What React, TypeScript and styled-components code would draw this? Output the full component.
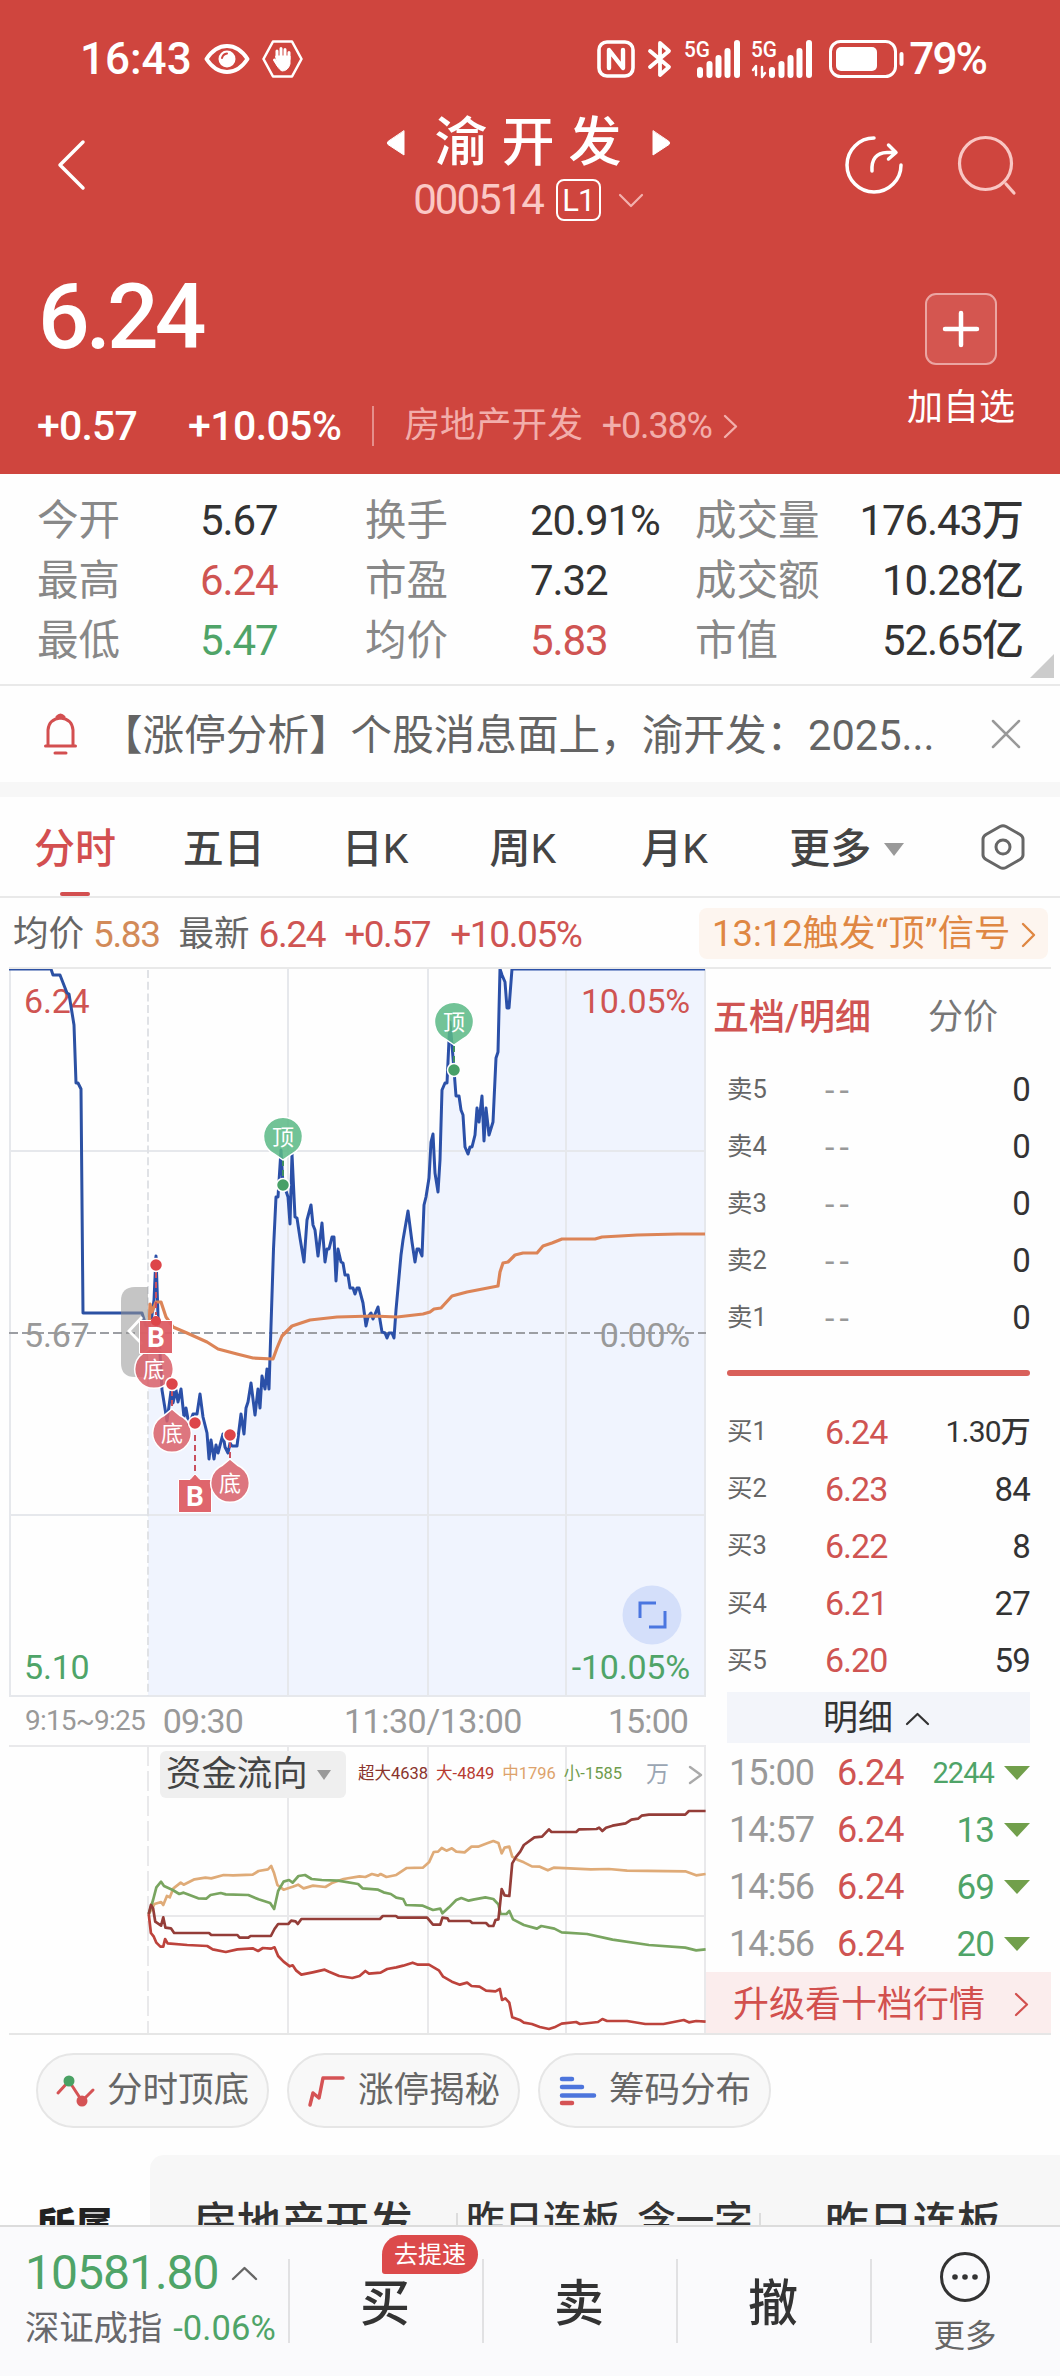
import React from 'react';
import styled, { createGlobalStyle } from 'styled-components';

const RED = '#cf5452';
const GREEN = '#4fa468';

const Global = createGlobalStyle`
  * { box-sizing: border-box; }
  body { margin: 0; background: #fefefe; }
`;

const Page = styled.div`
  width: 1060px;
  height: 2376px;
  overflow: hidden;
  display: flex;
  flex-direction: column;
  background: #fefefe;
  font-family: Roboto, 'Noto Sans CJK SC', sans-serif;
  line-height: 1;
  white-space: nowrap;
  color: #333;
`;

interface TextProps {
  $size: number;
  $color?: string;
  $weight?: number;
  $gap?: number;
  $ml?: number;
}

const Text = styled.span<TextProps>`
  font-size: ${(p) => p.$size}px;
  color: ${(p) => p.$color ?? 'inherit'};
  font-weight: ${(p) => p.$weight ?? 400};
  letter-spacing: ${(p) => p.$gap ?? 0}px;
  margin-left: ${(p) => p.$ml ?? 0}px;
`;

const Icon = styled.svg<{ $ml?: number }>`
  display: block;
  flex: none;
  overflow: visible;
  margin-left: ${(p) => p.$ml ?? 0}px;
  fill: none;
  stroke-linecap: round;
  stroke-linejoin: round;
`;

/* ---------- header ---------- */

const Header = styled.header`
  height: 474px;
  flex: none;
  background: #cf453e;
  color: #fff;
  display: flex;
  flex-direction: column;
`;

const StatusBar = styled.div`
  height: 116px;
  padding: 2px 74px 0 80px;
  display: flex;
  align-items: center;
  justify-content: space-between;
`;

const Cluster = styled.div`
  display: flex;
  align-items: center;
`;

const NavBar = styled.div`
  height: 124px;
  padding: 0 44px 0 57px;
  display: grid;
  grid-template-columns: 230px 1fr 230px;
`;

const NavSide = styled.div<{ $end?: boolean }>`
  display: flex;
  align-items: center;
  height: 98px;
  justify-content: ${(p) => (p.$end ? 'flex-end' : 'flex-start')};
  gap: 55px;
`;

const TitleBox = styled.div`
  display: flex;
  flex-direction: column;
  align-items: center;
  padding-right: 17px;
`;

const TitleRow = styled.div`
  height: 60px;
  display: flex;
  align-items: center;
  margin-top: -3px;
`;

const CodeRow = styled.div`
  height: 44px;
  margin-top: 5px;
  display: flex;
  align-items: center;
`;

const LevelTag = styled.span`
  width: 45px;
  height: 42px;
  margin: 0 18px 0 13px;
  border: 2px solid #fff;
  border-radius: 8px;
  font-size: 31px;
  letter-spacing: -1px;
  display: flex;
  align-items: center;
  justify-content: center;
`;

const PriceArea = styled.div`
  flex: 1;
  display: flex;
  justify-content: space-between;
  padding: 0 36px 0 37px;
`;

const PriceCol = styled.div`
  display: flex;
  flex-direction: column;
`;

const BigPrice = styled.div`
  height: 151px;
  padding: 3px 0 0 1px;
  display: flex;
  align-items: center;
  font-size: 91px;
  font-weight: 500;
  letter-spacing: -4px;
`;

const ChangeRow = styled.div`
  height: 70px;
  display: flex;
  align-items: center;
`;

const HeaderDivider = styled.i`
  width: 2px;
  height: 40px;
  margin: 0 30px 0 31px;
  background: #e58f8b;
`;

const AddBox = styled.div`
  width: 126px;
  display: flex;
  flex-direction: column;
  align-items: center;
  padding-top: 53px;
  gap: 25px;
`;

const AddButton = styled.div`
  width: 72px;
  height: 72px;
  border: 2px solid #eba5a2;
  border-radius: 11px;
  background: #d45650;
  display: flex;
  align-items: center;
  justify-content: center;
`;

/* ---------- quote summary ---------- */

const Stats = styled.section`
  position: relative;
  height: 212px;
  flex: none;
  padding: 17px 37px 0 37px;
  border-bottom: 2px solid #e9e9e9;
`;

const StatRow = styled.div`
  height: 60px;
  display: grid;
  grid-template-columns: 163px 165px 165px 165px 124px 1fr;
  align-items: center;
`;

const StatValue = styled.span<{ $tone?: string; $end?: boolean }>`
  font-size: 42px;
  font-weight: 450;
  letter-spacing: -1.1px;
  color: ${(p) => p.$tone ?? '#333'};
  text-align: ${(p) => (p.$end ? 'right' : 'left')};
`;

const Corner = styled.i`
  position: absolute;
  right: 6px;
  bottom: 6px;
  border-left: 24px solid transparent;
  border-bottom: 24px solid #ccc;
`;

const Notice = styled.section`
  height: 111px;
  flex: none;
  display: flex;
  align-items: center;
  padding: 0 40px 0 44px;
  border-bottom: 15px solid #f7f7f7;
`;

const NoticeText = styled.div`
  flex: 1;
  margin-left: 24px;
  padding-top: 4px;
  font-size: 41.6px;
  color: #646464;
`;

const Tabs = styled.nav`
  height: 101px;
  flex: none;
  display: flex;
  align-items: center;
  padding: 0 35px 0 34px;
  border-bottom: 2px solid #e9e9e9;
`;

const Tab = styled.div<{ $active?: boolean; $width: number }>`
  position: relative;
  width: ${(p) => p.$width}px;
  height: 99px;
  padding-top: 5px;
  display: flex;
  align-items: center;
  font-size: 41px;
  font-weight: 450;
  color: ${(p) => (p.$active ? '#d34f50' : '#444')};
  &::after {
    content: '';
    display: ${(p) => (p.$active ? 'block' : 'none')};
    position: absolute;
    left: 26px;
    bottom: 0;
    width: 30px;
    height: 4px;
    border-radius: 2px;
    background: #d34f50;
  }
`;

const Caret = styled.i<{ $w: number; $h: number; $color: string; $ml?: number }>`
  flex: none;
  border: ${(p) => p.$w / 2}px solid transparent;
  border-bottom: 0;
  border-top: ${(p) => p.$h}px solid ${(p) => p.$color};
  margin-left: ${(p) => p.$ml ?? 0}px;
`;

const InfoRow = styled.div`
  height: 71px;
  flex: none;
  display: flex;
  align-items: center;
  margin: 0 9px;
  padding: 4px 3px 0 4px;
  border-bottom: 2px solid #e9e9e9;
`;

const Signal = styled.div`
  height: 51px;
  width: 349px;
  margin-left: auto;
  margin-top: -3px;
  border-radius: 8px;
  background: #fdf5ef;
  color: #df8743;
  display: flex;
  align-items: center;
  padding: 3px 13px 0 13px;
  justify-content: space-between;
  font-size: 36.4px;
`;

/* ---------- trading area ---------- */

const Trading = styled.section`
  display: flex;
  height: 1066px;
  flex: none;
  position: relative;
  &::after {
    content: '';
    position: absolute;
    left: 9px;
    right: 9px;
    bottom: 0;
    height: 2px;
    background: #e6e6e6;
  }
`;

const ChartCol = styled.div`
  width: 706px;
  flex: none;
`;

const Plot = styled.svg`
  display: block;
  font-family: Roboto, 'Noto Sans CJK SC', sans-serif;
`;

const Axis = styled.div`
  height: 48px;
  padding: 0 0 0 25px;
  display: flex;
  align-items: center;
  color: #999;
`;

const FlowPanel = styled.div`
  position: relative;
  height: 290px;
`;

const FlowHead = styled.div`
  position: absolute;
  left: 160px;
  top: 6px;
  right: 2px;
  height: 47px;
  display: flex;
  align-items: center;
`;

const FlowSelect = styled.div`
  width: 186px;
  height: 47px;
  border-radius: 6px;
  background: #efefef;
  color: #444;
  font-size: 35.4px;
  display: flex;
  align-items: center;
  padding-left: 6px;
`;

const BookCol = styled.div`
  flex: 1;
  padding-right: 9px;
  display: flex;
  flex-direction: column;
`;

const BookTabs = styled.div`
  height: 92px;
  display: flex;
  align-items: center;
  padding: 5px 0 0 7px;
`;

const BookRow = styled.div`
  height: 57.1px;
  flex: none;
  margin: 0 21px;
  display: grid;
  grid-template-columns: 98px 80px 1fr;
  align-items: center;
  font-size: 25.5px;
  color: #666;
`;

const BookPrice = styled.span<{ $empty?: boolean }>`
  font-size: 34px;
  font-weight: 450;
  letter-spacing: ${(p) => (p.$empty ? 5 : -1)}px;
  color: ${(p) => (p.$empty ? '#999' : RED)};
`;

const BookQty = styled.span<{ $small?: boolean }>`
  font-size: ${(p) => (p.$small ? 30 : 33)}px;
  font-weight: 450;
  color: #333;
  text-align: right;
  letter-spacing: -0.8px;
`;

const Balance = styled.div`
  height: 6px;
  margin: 24px 21px 27px 21px;
  border-radius: 3px;
  background: #d9605a;
  flex: none;
`;

const DetailHead = styled.div`
  height: 51px;
  flex: none;
  margin: 3px 21px 0;
  padding: 3px 5px 0 0;
  background: #f3f5fa;
  display: flex;
  align-items: center;
  justify-content: center;
  gap: 13px;
  font-size: 35px;
  color: #333;
`;

const TickRow = styled.div`
  position: relative;
  height: 57px;
  flex: none;
  margin: 0 21px;
  display: grid;
  grid-template-columns: 108px 80px 1fr 36px;
  align-items: center;
  font-size: 36px;
  letter-spacing: -0.9px;
  color: #999;
  padding: 4px 0 0 2px;
`;

const TickPrice = styled.span`
  color: ${RED};
  font-weight: 450;
`;

const TickQty = styled.span<{ $small?: boolean }>`
  color: ${GREEN};
  text-align: right;
  font-weight: 450;
  font-size: ${(p) => (p.$small ? 29 : 35)}px;
`;

const Upgrade = styled.div`
  height: 61px;
  margin-top: auto;
  margin-bottom: 2px;
  background: #fbeded;
  color: #d2504e;
  font-size: 36px;
  display: flex;
  align-items: center;
  justify-content: space-between;
  padding: 4px 23px 0 27px;
`;

/* ---------- shortcuts & related ---------- */

const Shortcuts = styled.div`
  height: 120px;
  flex: none;
  padding: 18px 36px 0;
  display: flex;
  gap: 18px;
`;

const Shortcut = styled.div`
  width: 233px;
  height: 75px;
  border: 2px solid #e6e6e6;
  border-radius: 38px;
  background: #f8f8f8;
  color: #666;
  font-size: 35.5px;
  display: flex;
  align-items: center;
  padding-left: 18px;
  gap: 11px;
`;

const Related = styled.section`
  height: 70px;
  flex: none;
  overflow: hidden;
  display: flex;
  color: #333;
`;

const RelatedLabel = styled.div`
  width: 150px;
  flex: none;
  padding: 52px 0 0 37px;
  font-size: 38px;
  font-weight: 900;
  color: #222;
`;

const RelatedPanel = styled.div`
  flex: 1;
  background: #f7f7f7;
  border-top-left-radius: 14px;
  display: flex;
  padding: 47px 0 0 43px;
`;

const RelatedDivider = styled.i<{ $ml?: number }>`
  width: 2px;
  height: 40px;
  margin-top: 11px;
  margin-left: ${(p) => p.$ml ?? 0}px;
  background: #ddd;
`;

const BottomBar = styled.footer`
  flex: 1;
  border-top: 2px solid #dcdcdc;
  background: #fafafc;
  display: flex;
`;

const IndexBox = styled.div`
  width: 288px;
  flex: none;
  padding: 19px 0 0 25px;
`;

const IndexRow = styled.div<{ $h: number }>`
  height: ${(p) => p.$h}px;
  display: flex;
  align-items: center;
`;

const Action = styled.div`
  position: relative;
  flex: none;
  width: 194px;
  font-size: 50px;
  font-weight: 500;
  color: #333;
  display: flex;
  justify-content: center;
  padding-top: 52px;
  &::before {
    content: '';
    position: absolute;
    left: 0;
    top: 32px;
    height: 84px;
    width: 2px;
    background: #e1e1e3;
  }
`;

const MoreAction = styled(Action)`
  padding-top: 25px;
  flex-direction: column;
  justify-content: flex-start;
  align-items: center;
  gap: 19px;
  font-size: 31.5px;
  font-weight: 400;
  color: #666;
  width: 190px;
`;

const Badge = styled.span`
  position: absolute;
  left: 94px;
  top: 8px;
  width: 96px;
  height: 39px;
  border-radius: 20px 20px 20px 3px;
  background: #dc4a4b;
  color: #fff;
  font-size: 24px;
  font-weight: 400;
  display: flex;
  align-items: center;
  justify-content: center;
`;

/* ---------- data ---------- */

const PRE_OPEN = '9,9 51,9 53,15 60,15 67,33 69,34 74,65 76,123 78,123 81,129 83,353 142,353 146,366 148,366';

const PRICE =
  '148,366 151,362 154,340 156,296 158,356 162,430 167,461 172,424 173,443 176,430 178,442 181,429 184,457 186,448 189,465 193,454 197,454 200,434 203,457 207,473 209,499 211,480 214,499 216,485 218,493 223,474 225,487 228,493 230,483 232,486 237,486 241,454 244,474 246,448 248,442 251,423 255,455 258,429 260,448 262,416 265,429 267,409 269,429 270,397 273.5,289 276,237 278,237 281,190 283,225 285,228 288,237 290,264 292,194 295,257 297,258 300,278 304,302 307,260 311,245 313,265 315,270 318,296 322,263 325,302 327,289 329,289 332,277 334,277 336,321 338,289 341,302 343,303 345,315 348,315 350,328 353,328 355,334 357,328 359,328 363,343 366,366 368,357 371,353 373,359 378,347 380,360 382,372 385,373 387,378 389,373 392,373 394,378 396,350 398,328 401,295 403,280 408,251 412,282 415,302 417,289 419,289 422,296 424,245 426,237 429,218 431,182 433,174 435,213 438,232 440,200 442,130 445,123 447,123 449,80 450,62 452,85 454,110 456,136 459,136 461,150 463,155 465,187 468,194 470,187 472,187 475,175 477,148 479,162 482,136 484,181 486,148 489,175 493,162 496,98 498,92 500,9 502,15 505,22 507,48 509,48 512,9 705,9';

const AVERAGE =
  '149,372 150,344 152,352 156,342 161,342 166,357 173,367 187,373 207,382 218,389 237,394 253,398 273,399 277,388 282,376 292,366 310,360 337,357 373,356 397,357 423,354 430,352 434,349 441,348 452,336 467,332 498,326 500,312 503,303 508,302 515,295 523,293 537,293 543,286 552,283 562,279 595,279 602,277 620,276 637,275 678,274 705,274';

const FLOWS = [
  {
    color: '#dfab78',
    points:
      '24,402 40,372 58,366 64,375 74,348 82,352 92,325 112,308 120,314 150,298 180,293 196,295 230,285 256,286 310,284 326,273 352,268 361,258 369,280 378,315 395,329 420,320 435,314 450,325 476,317 510,321 530,308 560,297 604,289 620,291 638,282 655,287 662,282 678,291 705,285 734,264 778,263 795,247 808,216 820,215 830,204 843,212 858,205 870,215 893,217 912,200 930,200 955,190 972,183 986,189 995,220 1003,203 1016,200 1024,230 1040,240 1056,247 1078,259 1100,260 1122,271 1138,263 1240,268 1290,267 1340,272 1500,274 1530,286 1556,282',
  },
  {
    color: '#79a560',
    points:
      '24,402 36,360 45,322 58,305 66,318 90,330 108,342 120,338 160,355 182,356 194,345 222,339 236,343 298,345 326,358 358,369 369,387 380,333 395,305 410,300 420,308 436,288 454,285 472,297 500,300 545,302 600,312 612,325 655,329 670,337 690,342 705,353 724,357 732,375 778,377 806,390 826,386 832,400 850,382 870,360 884,354 904,362 920,358 950,352 972,357 986,373 992,402 1008,402 1016,393 1026,418 1056,435 1092,446 1104,438 1140,446 1160,457 1230,462 1300,479 1400,495 1500,503 1530,511 1556,508',
  },
  {
    color: '#943d38',
    points:
      '24,402 30,375 36,385 42,425 58,437 64,412 70,443 85,445 94,459 190,459 196,465 268,465 274,473 298,473 304,468 360,468 370,447 380,432 408,432 416,422 428,424 434,432 444,417 660,417 668,408 704,408 710,413 790,413 806,434 826,434 832,413 846,415 850,423 908,423 914,429 952,429 960,438 972,438 978,420 986,418 995,327 1003,346 1016,348 1024,250 1035,230 1046,215 1056,195 1085,172 1106,170 1125,148 1132,156 1200,156 1208,148 1256,147 1263,143 1272,153 1282,143 1300,137 1336,130 1352,119 1370,116 1380,107 1400,104 1500,104 1510,93 1556,93',
  },
  {
    color: '#bd433c',
    points:
      '24,402 30,459 38,470 45,488 56,500 64,500 69,477 76,490 130,495 185,498 200,508 236,516 268,508 310,505 325,513 338,504 360,506 370,502 380,528 395,545 412,559 420,556 430,572 444,584 475,577 508,569 520,575 548,588 584,594 604,588 620,573 630,581 662,578 680,567 705,562 724,557 750,548 765,554 795,554 822,571 834,590 858,605 880,614 900,608 912,618 934,620 952,632 978,634 990,627 996,660 1005,655 1016,668 1024,712 1045,720 1056,728 1078,732 1100,741 1125,747 1140,742 1160,731 1200,726 1210,732 1260,726 1272,717 1285,723 1340,723 1390,732 1440,732 1496,720 1510,727 1530,723 1556,725',
  },
];

const STATS = [
  { a: '今开', av: '5.67', b: '换手', bv: '20.91%', c: '成交量', cv: '176.43万' },
  { a: '最高', av: '6.24', at: RED, b: '市盈', bv: '7.32', c: '成交额', cv: '10.28亿' },
  { a: '最低', av: '5.47', at: GREEN, b: '均价', bv: '5.83', bt: RED, c: '市值', cv: '52.65亿' },
];

const BIDS = [
  ['买1', '6.24', '1.30万'],
  ['买2', '6.23', '84'],
  ['买3', '6.22', '8'],
  ['买4', '6.21', '27'],
  ['买5', '6.20', '59'],
];

const TICKS = [
  ['15:00', '2244'],
  ['14:57', '13'],
  ['14:56', '69'],
  ['14:56', '20'],
];

/* ---------- pieces ---------- */

const Chevron = ({ w, h, color, sw = 2.4, ml }: { w: number; h: number; color: string; sw?: number; ml?: number }) => (
  <Icon $ml={ml} width={w} height={h} stroke={color} strokeWidth={sw}>
    <path d={`M1 1L${w - 1} ${h / 2}L1 ${h - 1}`} />
  </Icon>
);

const SignalBars = ({ data }: { data?: boolean }) => (
  <Icon $ml={data ? 9 : 11} width={data ? 63 : 58} height={38} viewBox={data ? '0 0 63 38' : '0 0 58 38'}>
    <text x="0" y="17" fontSize="22" fontWeight="500" fill="#fff" stroke="none" textLength="26" lengthAdjust="spacingAndGlyphs">
      5G
    </text>
    {data && (
      <path d="M5 35V27M2 30L5 26M11 27V36M14 33L11 37" stroke="#fff" strokeWidth="2.4" />
    )}
    <g stroke="#fff" strokeWidth="6" transform={data ? 'translate(5 0)' : undefined}>
      <path d="M16 30V35M25.500 24V35M34.500 18V35M43.500 11V35M53 3V35" />
    </g>
  </Icon>
);

const StatusIcons = () => (
  <Cluster>
    <Icon width={38} height={38} viewBox="0 0 38 38">
      <rect x="2" y="2" width="34" height="34" rx="8" stroke="#fff" strokeWidth="3.600" />
      <path d="M12 28V10L26 28V10" stroke="#fff" strokeWidth="4.400" />
    </Icon>
    <Icon $ml={12} width={26} height={38} viewBox="0 0 26 38" stroke="#fff" strokeWidth="3.800">
      <path d="M3 11L22 27L13 35V3L22 11L3 27" />
    </Icon>
    <SignalBars />
    <SignalBars data />
    <Icon $ml={15} width={76} height={38} viewBox="0 0 76 38">
      <rect x="1.500" y="1.500" width="65" height="35" rx="10" stroke="#fff" strokeWidth="3" />
      <rect x="7" y="7" width="41" height="24" rx="5" fill="#fff" />
      <path d="M72.500 14V24" stroke="#fff" strokeWidth="4" />
    </Icon>
    <Text $size={44} $weight={500} $gap={-1.9} $ml={4}>79%</Text>
  </Cluster>
);

interface PinProps {
  x: number;
  y: number;
  label: string;
  up?: boolean;
  color: string;
}

const RoundPin = ({ x, y, label, up, color }: PinProps) => (
  <g transform={`translate(${x} ${y})`}>
    <path
      d={up ? 'M0 -24L8 -17.500A19.300 19.300 0 1 1 -8 -17.500Z' : 'M0 23L-9 17A19.500 19.500 0 1 1 9 17Z'}
      fill={color}
      fillOpacity="0.86"
      stroke="#fff"
      strokeWidth="1.500"
    />
    <text y="8" fontSize="22" fill="#fff" textAnchor="middle">{label}</text>
  </g>
);

const BuyPin = ({ x, y }: { x: number; y: number }) => (
  <g transform={`translate(${x} ${y})`}>
    <path d="M-16.500 -16.500H-5L0 -22L5 -16.500H16.500V16.500H-16.500Z" fill="#dd5d64" fillOpacity="0.95" stroke="#fff" strokeWidth="1" />
    <text y="10" fontSize="28" fontWeight="700" fill="#fff" textAnchor="middle">B</text>
  </g>
);

const Dot = ({ x, y, color = '#dd4549' }: { x: number; y: number; color?: string }) => (
  <circle cx={x} cy={y} r="6.500" fill={color} stroke="#fff" strokeWidth="1.500" />
);

const MinuteChart = () => (
  <Plot width={706} height={728} viewBox="0 9 706 728">
    <polygon points={`${PRICE} 705,736 148,736`} fill="#f0f4fe" />
    <g stroke="#e6e8ec" strokeWidth="2" fill="none">
      <path d="M9 191H706M9 555H706M9 736H706M10 8V736M288 8V736M428 8V736M566 8V736M705 8V736" />
      <path d="M148 10V736" stroke="#e0e2e6" strokeDasharray="8 3.700" />
    </g>
    <path d="M9 373H706" stroke="#9c9ea3" strokeWidth="1.800" strokeDasharray="9 4" />
    <g fontSize="34" fontWeight="450" letterSpacing="-0.2">
      <text x="24" y="53" fill={RED}>6.24</text>
      <text x="690" y="53" fill={RED} textAnchor="end">10.05%</text>
      <text x="24" y="387" fill="#999">5.67</text>
      <text x="690" y="387" fill="#999" textAnchor="end">0.00%</text>
      <text x="24" y="719" fill={GREEN}>5.10</text>
      <text x="690" y="719" fill={GREEN} textAnchor="end">-10.05%</text>
    </g>
    <g fill="none" strokeLinejoin="round" strokeWidth="3">
      <polyline points={PRE_OPEN} stroke="#2c51a3" />
      <polyline points={PRICE} stroke="#2b50a8" />
      <polyline points={AVERAGE} stroke="#dc8457" strokeWidth="3.200" />
    </g>
    <path d="M148 327H135Q121 327 121 341V403Q121 417 135 417H148Z" fill="#969696" fillOpacity="0.55" />
    <path d="M142 357L129 371L142 384" fill="none" stroke="#fff" strokeWidth="2.800" />
    <RoundPin x={154} y={409} label="底" up color="#da616a" />
    <g stroke="#c9505f" strokeWidth="2" strokeDasharray="6 4">
      <path d="M156 312V356M172 430V450M195 475V512M230 482V498" />
      <path d="M283 200V220M454 86V106" stroke="#3f8f62" />
    </g>
    <Dot x={156} y={305} />
    <BuyPin x={156} y={377} />
    <circle cx="156" cy="361" r="5" fill="#dd4549" />
    <RoundPin x={172} y={473} label="底" up color="#da616a" />
    <Dot x={172} y={424} />
    <BuyPin x={195} y={536} />
    <Dot x={195} y={463} />
    <RoundPin x={230} y={523} label="底" up color="#da616a" />
    <Dot x={230} y={475} />
    <RoundPin x={283} y={177} label="顶" color="#5bb986" />
    <Dot x={283} y={225} color="#48a067" />
    <RoundPin x={454} y={62} label="顶" color="#5bb986" />
    <Dot x={454} y={110} color="#48a067" />
    <circle cx="652" cy="655" r="29.500" fill="#d4dffa" />
    <path d="M640 658V643H656M665 651V667H649" fill="none" stroke="#4a76e0" strokeWidth="3" />
  </Plot>
);

const FlowChart = () => (
  <Plot width={706} height={290} viewBox="0 0 706 290">
    <g stroke="#e9e9eb" strokeWidth="2" fill="none">
      <path d="M9 1H706M148 171H706M288 1V290M428 1V290M566 1V290M705 1V290" />
      <path d="M148 1V290" strokeDasharray="20 5" />
    </g>
    <g transform="translate(140 35) scale(0.36350 0.33333)" fill="none" strokeLinejoin="round" strokeWidth="2.700">
      {FLOWS.map((f) => (
        <polyline key={f.color} points={f.points} stroke={f.color} vectorEffect="non-scaling-stroke" />
      ))}
    </g>
  </Plot>
);

export default function App() {
  return (
    <>
      <Global />
      <Page>
        <Header>
          <StatusBar>
            <Cluster>
              <Text $size={44} $weight={500}>16:43</Text>
              <Icon $ml={12} width={46} height={30} viewBox="0 0 46 30">
                <path d="M2.500 15Q11 2 23 2T43.500 15Q35 28 23 28T2.500 15Z" stroke="#fff" strokeWidth="4" />
                <circle cx="23" cy="15" r="8.500" fill="#fff" />
                <path d="M18 14Q19 10 23 9.500" stroke="#cf453e" strokeWidth="2" />
              </Icon>
              <Icon $ml={12} width={41} height={38} viewBox="0 0 41 38" stroke="#fff">
                <path d="M11 1.500H30L39.500 19L30 36.500H11L1.500 19Z" strokeWidth="2.600" />
                <path d="M15 18V11M19 17V8.500M23 17V9.500M27 19V12.500M12.500 20L16 25" strokeWidth="3" />
                <path d="M14 16H28V24Q26 31 20 31Q16 29 12 20L15 22Z" fill="#fff" strokeWidth="1" />
              </Icon>
            </Cluster>
            <StatusIcons />
          </StatusBar>
          <NavBar>
            <NavSide>
              <Icon width={28} height={50} viewBox="0 0 28 50" stroke="#fff" strokeWidth="3.500">
                <path d="M26 2L3 25L26 48" />
              </Icon>
            </NavSide>
            <TitleBox>
              <TitleRow>
                <Icon width={18} height={26} viewBox="0 0 18 26">
                  <path d="M17 1V25L1 14.500Q-0.500 13 1 11.500Z" fill="#fff" stroke="#fff" strokeWidth="1" />
                </Icon>
                <Text $size={53} $weight={500} $gap={14} $ml={30}>渝开发</Text>
                <Icon $ml={16} width={18} height={26} viewBox="0 0 18 26">
                  <path d="M1 1V25L17 14.500Q18.500 13 17 11.500Z" fill="#fff" stroke="#fff" strokeWidth="1" />
                </Icon>
              </TitleRow>
              <CodeRow>
                <Text $size={42} $color="#fbc8c5" $gap={-2}>000514</Text>
                <LevelTag>L1</LevelTag>
                <Icon width={24} height={13} viewBox="0 0 24 13" stroke="#f3b1ae" strokeWidth="2.200">
                  <path d="M1 1L12 12L23 1" />
                </Icon>
              </CodeRow>
            </TitleBox>
            <NavSide $end>
              <Icon width={58} height={58} viewBox="0 0 58 58" stroke="#fff" strokeWidth="3.500">
                <path d="M29 2A27 27 0 1 0 56 29" />
                <path d="M27 35Q26 17 42 16.500H50M43.500 9L51 16.500L43.500 23" />
              </Icon>
              <Icon width={58} height={58} viewBox="0 0 58 58" stroke="#f9c6c3" strokeWidth="3.200">
                <circle cx="27.500" cy="27.500" r="26" />
                <path d="M48 48L56 57" />
              </Icon>
            </NavSide>
          </NavBar>
          <PriceArea>
            <PriceCol>
              <BigPrice>6.24</BigPrice>
              <ChangeRow>
                <Text $size={41} $weight={500} $gap={-0.8}>+0.57</Text>
                <Text $size={41} $weight={500} $gap={-0.6} $ml={51}>+10.05%</Text>
                <HeaderDivider />
                <Text $size={35.7} $color="#f2aeab">房地产开发</Text>
                <Text $size={36} $color="#f2aeab" $gap={-1.2} $ml={19}>+0.38%</Text>
                <Chevron w={13} h={23} color="#f2aeab" ml={12} />
              </ChangeRow>
            </PriceCol>
            <AddBox>
              <AddButton>
                <Icon width={36} height={36} viewBox="0 0 36 36" stroke="#fff" strokeWidth="4.500">
                  <path d="M18 2V34M2 18H34" />
                </Icon>
              </AddButton>
              <Text $size={36}>加自选</Text>
            </AddBox>
          </PriceArea>
        </Header>

        <Stats>
          {STATS.map((r) => (
            <StatRow key={r.a}>
              <Text $size={41.5} $color="#888">{r.a}</Text>
              <StatValue $tone={r.at}>{r.av}</StatValue>
              <Text $size={41.5} $color="#888">{r.b}</Text>
              <StatValue $tone={r.bt}>{r.bv}</StatValue>
              <Text $size={41.5} $color="#888">{r.c}</Text>
              <StatValue $end>{r.cv}</StatValue>
            </StatRow>
          ))}
          <Corner />
        </Stats>

        <Notice>
          <Icon width={33} height={42} viewBox="0 0 33 42" stroke="#d34f50" strokeWidth="3">
            <path d="M1.500 33H31.500M4 33V17Q5 6 16.500 5Q28 6 29 17V33M13 4Q16.500 0 20 4M11 40H22" />
          </Icon>
          <NoticeText>【涨停分析】个股消息面上，渝开发：2025...</NoticeText>
          <Icon width={28} height={28} viewBox="0 0 28 28" stroke="#999" strokeWidth="2.500">
            <path d="M1 1L27 27M27 1L1 27" />
          </Icon>
        </Notice>

        <Tabs>
          <Tab $active $width={149}>分时</Tab>
          <Tab $width={159}>五日</Tab>
          <Tab $width={148}>日K</Tab>
          <Tab $width={152}>周K</Tab>
          <Tab $width={148}>月K</Tab>
          <Tab $width={192}>
            更多
            <Caret $w={21} $h={13} $color="#999" $ml={13} />
          </Tab>
          <Icon width={44} height={46} viewBox="0 0 44 46" stroke="#666" strokeWidth="3">
            <path d="M19 2.500Q22 1 25 2.500L39 10.500Q42 12.500 42 15V31Q42 33.500 39 35.500L25 43.500Q22 45 19 43.500L5 35.500Q2 33.500 2 31V15Q2 12.500 5 10.500Z" />
            <circle cx="22" cy="23" r="7" />
          </Icon>
        </Tabs>

        <InfoRow>
          <Text $size={35.5} $color="#666">均价</Text>
          <Text $size={37} $color="#d28a58" $gap={-1.4} $weight={450} $ml={9}>5.83</Text>
          <Text $size={35.5} $color="#666" $ml={19}>最新</Text>
          <Text $size={37} $color={RED} $gap={-1.4} $weight={450} $ml={9}>6.24</Text>
          <Text $size={37} $color={RED} $gap={-1.4} $weight={450} $ml={19}>+0.57</Text>
          <Text $size={37} $color={RED} $gap={-1.4} $weight={450} $ml={20}>+10.05%</Text>
          <Signal>
            <span>13:12触发“顶”信号</span>
            <Chevron w={13} h={24} color="#df8743" />
          </Signal>
        </InfoRow>

        <Trading>
          <ChartCol>
            <MinuteChart />
            <Axis>
              <Text $size={28} $gap={-0.8}>9:15~9:25</Text>
              <Text $size={34} $gap={-0.9} $ml={18}>09:30</Text>
              <Text $size={34} $gap={-0.5} $ml={101}>11:30/13:00</Text>
              <Text $size={34} $gap={-0.9} $ml={86}>15:00</Text>
            </Axis>
            <FlowPanel>
              <FlowChart />
              <FlowHead>
                <FlowSelect>
                  资金流向
                  <Caret $w={15} $h={10} $color="#999" $ml={9} />
                </FlowSelect>
                <Text $size={16.5} $color="#8a332c" $ml={12}>超大4638</Text>
                <Text $size={16.5} $color="#b83a31" $ml={8}>大-4849</Text>
                <Text $size={16.5} $color="#dda26b" $ml={8}>中1796</Text>
                <Text $size={16.5} $color="#6f9c4c" $ml={8}>小-1585</Text>
                <Text $size={23} $color="#9aa5b3" $ml={24}>万</Text>
                <Chevron w={13} h={18} color="#aaa" ml={20} />
              </FlowHead>
            </FlowPanel>
          </ChartCol>

          <BookCol>
            <BookTabs>
              <Text $size={36} $color={RED} $weight={500}>五档/明细</Text>
              <Text $size={35} $color="#777" $ml={57}>分价</Text>
            </BookTabs>
            {[5, 4, 3, 2, 1].map((n) => (
              <BookRow key={n}>
                <span>卖{n}</span>
                <BookPrice $empty>--</BookPrice>
                <BookQty>0</BookQty>
              </BookRow>
            ))}
            <Balance />
            {BIDS.map(([label, price, qty]) => (
              <BookRow key={label}>
                <span>{label}</span>
                <BookPrice>{price}</BookPrice>
                <BookQty $small={qty.length > 3}>{qty}</BookQty>
              </BookRow>
            ))}
            <DetailHead>
              明细
              <Icon width={23} height={12} viewBox="0 0 23 12" stroke="#333" strokeWidth="2.200">
                <path d="M1 11L11.500 1L22 11" />
              </Icon>
            </DetailHead>
            {TICKS.map(([time, qty], i) => (
              <TickRow key={i}>
                <span>{time}</span>
                <TickPrice>6.24</TickPrice>
                <TickQty $small={qty.length > 3}>{qty}</TickQty>
                <Caret $w={26} $h={14} $color="#719f4b" $ml={10} />
              </TickRow>
            ))}
            <Upgrade>
              升级看十档行情
              <Chevron w={13} h={23} color="#d2504e" sw={2.2} />
            </Upgrade>
          </BookCol>
        </Trading>

        <Shortcuts>
          <Shortcut>
            <Icon width={40} height={32} viewBox="0 0 40 32" stroke="#d55355" strokeWidth="3">
              <path d="M2 18L13 6L26 26L37 15" />
              <circle cx="13" cy="6" r="5.500" fill="#4aa164" stroke="none" />
              <circle cx="26" cy="26" r="5.500" fill="#d55355" stroke="none" />
            </Icon>
            分时顶底
          </Shortcut>
          <Shortcut>
            <Icon width={40} height={32} viewBox="0 0 40 32" stroke="#d55355" strokeWidth="3.500">
              <path d="M3 30L6 18L12 23L16 3H36" />
            </Icon>
            涨停揭秘
          </Shortcut>
          <Shortcut>
            <Icon width={40} height={32} viewBox="0 0 40 32" stroke="#4d75dc" strokeWidth="4.500" strokeLinecap="butt">
              <path d="M4 4H14M4 12H24M4 20.500H36" />
              <path d="M4 28H14" stroke="#d55355" />
            </Icon>
            筹码分布
          </Shortcut>
        </Shortcuts>

        <Related>
          <RelatedLabel>所属</RelatedLabel>
          <RelatedPanel>
            <Text $size={44} $weight={500}>房地产开发</Text>
            <RelatedDivider $ml={43} />
            <Text $size={38.5} $weight={500} $ml={8}>昨日连板_含一字</Text>
            <RelatedDivider $ml={6} />
            <Text $size={44} $weight={500} $ml={64}>昨日连板</Text>
          </RelatedPanel>
        </Related>

        <BottomBar>
          <IndexBox>
            <IndexRow $h={54}>
              <Text $size={48} $color={GREEN} $gap={-1}>10581.80</Text>
              <Icon $ml={13} width={25} height={13} viewBox="0 0 25 13" stroke="#666" strokeWidth="2.400">
                <path d="M1 12L12.500 1L24 12" />
              </Icon>
            </IndexRow>
            <IndexRow $h={56}>
              <Text $size={34.3} $color="#68686c">深证成指</Text>
              <Text $size={34.5} $color={GREEN} $gap={0.1} $ml={11}>-0.06%</Text>
            </IndexRow>
          </IndexBox>
          <Action>
            买<Badge>去提速</Badge>
          </Action>
          <Action>卖</Action>
          <Action>撤</Action>
          <MoreAction>
            <Icon width={50} height={50} viewBox="0 0 50 50" stroke="#333" strokeWidth="3">
              <circle cx="25" cy="25" r="23.500" />
              <g fill="#333" stroke="none">
                <circle cx="15" cy="25" r="2.800" />
                <circle cx="25" cy="25" r="2.800" />
                <circle cx="35" cy="25" r="2.800" />
              </g>
            </Icon>
            更多
          </MoreAction>
        </BottomBar>
      </Page>
    </>
  );
}
